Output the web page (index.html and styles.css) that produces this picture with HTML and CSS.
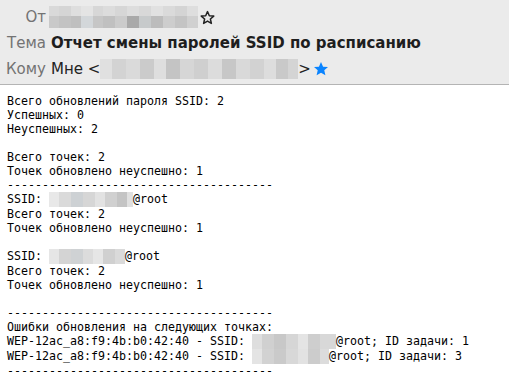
FILE: index.html
```html
<!DOCTYPE html>
<html>
<head>
    <title>Отчет смены паролей SSID по расписанию</title>
    <link rel="stylesheet" href="styles.css">
</head>
<body>
    <div class="header">
        <div class="row row-from">
            <span class="label">От</span>
            <span class="value">
                <span class="blur blur-from"></span>
                <svg class="star" width="15" height="15" viewBox="0 0 24 24">
                    <path d="M12 2.5l2.9 6.6 7.1.6-5.4 4.7 1.6 7-6.2-3.7-6.2 3.7 1.6-7L2 9.7l7.1-.6z" fill="none" stroke="#222" stroke-width="2.4" stroke-linejoin="round"/>
                </svg>
            </span>
        </div>
        <div class="row row-subject">
            <span class="label">Тема</span>
            <span class="value subject">Отчет смены паролей SSID по расписанию</span>
        </div>
        <div class="row row-to">
            <span class="label">Кому</span>
            <span class="value"><span class="to-name">Мне &lt;</span><span class="blur blur-to"></span><span>&gt;</span><svg class="star star-blue" width="16" height="16" viewBox="0 0 24 24">
                    <path d="M12 1.5l3.1 7 7.4.6-5.6 4.9 1.7 7.4L12 17.5l-6.6 3.9 1.7-7.4-5.6-4.9 7.4-.6z" fill="#0a84ff"/>
                </svg></span>
        </div>
    </div>
    <pre class="message">Всего обновлений пароля SSID: 2
Успешных: 0
Неуспешных: 2

Всего точек: 2
Точек обновлено неуспешно: 1
--------------------------------------
SSID: <span class="blur blur-ssid1"></span>@root
Всего точек: 2
Точек обновлено неуспешно: 1

SSID: <span class="blur blur-ssid2"></span>@root
Всего точек: 2
Точек обновлено неуспешно: 1

--------------------------------------
Ошибки обновления на следующих точках:
WEP-12ac_a8:f9:4b:b0:42:40 - SSID: <span class="blur blur-err1"></span>@root; ID задачи: 1
WEP-12ac_a8:f9:4b:b0:42:40 - SSID: <span class="blur blur-err2"></span>@root; ID задачи: 3
--------------------------------------</pre>
</body>
</html>
```

FILE: styles.css
```css
body {
    margin: 0;
    background: #ffffff;
    font-family: "DejaVu Sans", sans-serif;
}

.header {
    background: #ebebeb;
    border-bottom: 1px solid #b4b4b4;
    padding-top: 4px;
    height: 80px;
}

.row {
    display: flex;
    align-items: center;
    font-size: 15px;
    color: #222;
}

.row-from {
    height: 26px;
}

.row-subject {
    height: 25px;
}

.row-to {
    height: 27px;
}

.label {
    width: 46px;
    text-align: right;
    color: #737373;
    margin-right: 5px;
    flex-shrink: 0;
}

.value {
    display: flex;
    align-items: center;
    white-space: nowrap;
}

.to-name {
    white-space: pre;
}

.subject {
    font-weight: bold;
    color: #1e1e1e;
}

.blur {
    display: inline-block;
}

.blur-from {
    width: 149px;
    height: 22px;
    margin-left: -2px;
    background:
        linear-gradient(90deg, #d9d9d9 0 10px, #d5d5d5 10px 22px, #dedede 22px 32px, #e4e4e4 32px 44px, #d7d7d7 44px 54px, #dcdcdc 54px 66px, #d6d6d6 66px 78px, #dddddd 78px 90px, #d8d8d8 90px 102px, #e1e1e1 102px 114px, #dadada 114px 126px, #d4d4d4 126px 138px, #dedede 138px) top / 100% 10px no-repeat,
        linear-gradient(90deg, #c9c9c9 0 10px, #c3c3c3 10px 22px, #bfbfbf 22px 32px, #d3d7da 32px 44px, #c6c6c6 44px 54px, #c0c0c0 54px 66px, #cbcbcb 66px 78px, #a9a9a9 78px 90px, #c7cacb 90px 102px, #bcbcbc 102px 114px, #cdcdcd 114px 126px, #c4c4c4 126px 138px, #d0d0d0 138px) bottom / 100% 12px no-repeat;
}

.blur-to {
    width: 198px;
    height: 20px;
    background: linear-gradient(90deg, #e0e0e0 0 12px, #d3d3d3 12px 26px, #dadada 26px 40px, #cbcbcb 40px 54px, #dedede 54px 66px, #c4c4c4 66px 80px, #d6d6d6 80px 94px, #cfcfcf 94px 108px, #dcdcdc 108px 122px, #c7c7c7 122px 136px, #d9d9d9 136px 150px, #d2d2d2 150px 164px, #dddddd 164px 176px, #c9c9c9 176px 188px, #d4d4d4 188px);
}

.star {
    margin-left: 2px;
    margin-top: 1px;
}

.star-blue {
    margin-left: 2px;
}

.message {
    margin: 0;
    padding: 9px 7px 0;
    font-family: "DejaVu Sans Mono", monospace;
    font-size: 11.63px;
    line-height: 14px;
    color: #000;
}

.message .blur {
    height: 15px;
    vertical-align: top;
}

.blur-ssid1 {
    width: 84px;
    background: linear-gradient(90deg, #e8e8e8 0 10px, #dadada 10px 22px, #cdd1d4 22px 34px, #d6d6d6 34px 46px, #e2e2e2 46px 56px, #d0d0d0 56px 68px, #c4c4c4 68px 78px, #e0e0e0 78px);
}

.blur-ssid2 {
    width: 76px;
    background: linear-gradient(90deg, #e6e6e6 0 10px, #d4d4d4 10px 22px, #cfd2d4 22px 34px, #dcdcdc 34px 44px, #e6e6e6 44px 54px, #d0d0d0 54px 66px, #dadada 66px);
}

.blur-err1 {
    width: 84px;
    background: linear-gradient(90deg, #dedede 0 10px, #d0d0d0 10px 22px, #c8c8c8 22px 34px, #d6d6d6 34px 46px, #e4e4e4 46px 56px, #cecece 56px 68px, #d8d8d8 68px);
}

.blur-err2 {
    width: 77px;
    background: linear-gradient(90deg, #e4e4e4 0 10px, #d2d2d2 10px 22px, #cacaca 22px 34px, #d8d8d8 34px 46px, #e2e2e2 46px 56px, #cccccc 56px 68px, #dcdcdc 68px);
}
```
